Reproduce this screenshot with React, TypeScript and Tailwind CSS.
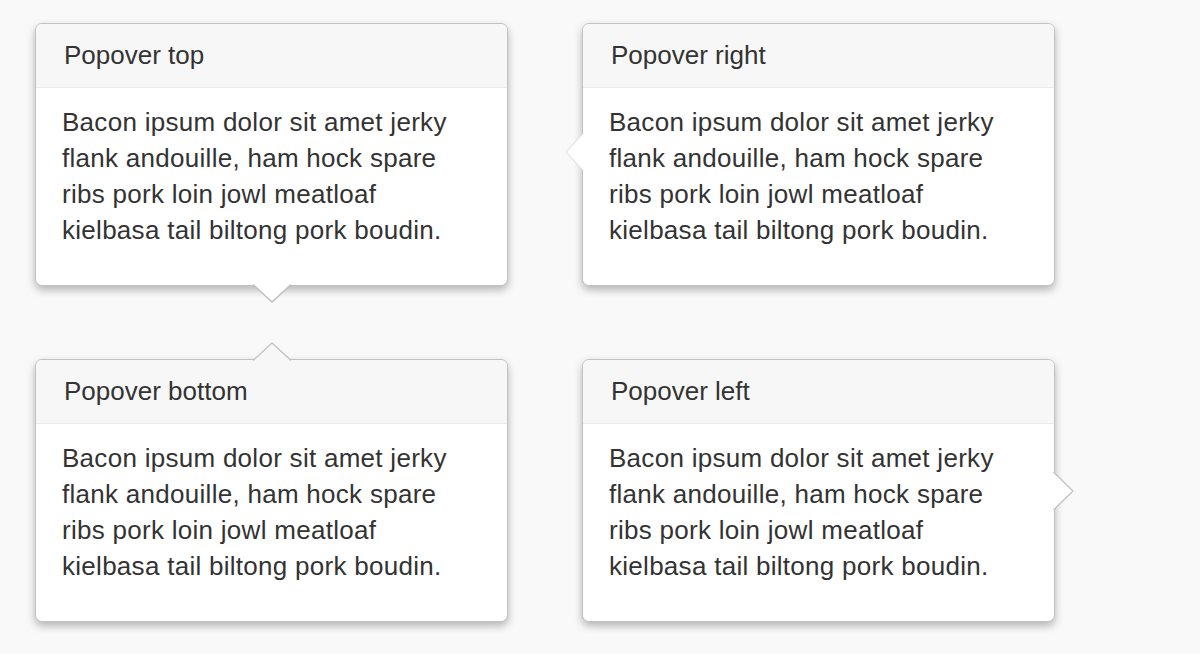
import React from "react";

type Side = "top" | "right" | "bottom" | "left";

const text =
  "Bacon ipsum dolor sit amet jerky flank andouille, ham hock spare ribs pork loin jowl meatloaf kielbasa tail biltong pork boudin.";

const lines = [
  "Bacon ipsum dolor sit amet jerky",
  "flank andouille, ham hock spare",
  "ribs pork loin jowl meatloaf",
  "kielbasa tail biltong pork boudin.",
];

// little triangle hanging off the box, drawn over the border
const Arrow: React.FC<{ side: Side }> = ({ side }) => {
  if (side === "top") {
    // popover sits above its target, arrow points down
    return (
      <svg
        className="absolute left-1/2 -translate-x-1/2 -bottom-[18px]"
        width="38"
        height="19"
        viewBox="0 0 38 19"
      >
        <polygon points="0,0 19,18 38,0" fill="#ffffff" />
        <polyline points="0,0.5 19,18 38,0.5" fill="none" stroke="#bdbdbd" strokeWidth="1.3" />
      </svg>
    );
  }
  if (side === "bottom") {
    return (
      <svg
        className="absolute left-1/2 -translate-x-1/2 -top-[18px]"
        width="38"
        height="19"
        viewBox="0 0 38 19"
      >
        <polygon points="0,19 19,1 38,19" fill="#f7f7f7" />
        <polyline points="0,18.5 19,1 38,18.5" fill="none" stroke="#c4c4c4" strokeWidth="1.3" />
      </svg>
    );
  }
  if (side === "right") {
    return (
      <svg
        className="absolute top-1/2 -translate-y-1/2 -left-[18px] mt-[-3px]"
        width="19"
        height="38"
        viewBox="0 0 19 38"
      >
        <polygon points="19,0 1,19 19,38" fill="#ffffff" />
        <polyline points="18.5,0 1,19 18.5,38" fill="none" stroke="#e6e6e6" strokeWidth="1.2" />
      </svg>
    );
  }
  return (
    <svg
      className="absolute top-1/2 -translate-y-1/2 -right-[20px]"
      width="21"
      height="38"
      viewBox="0 0 21 38"
    >
      <polygon points="0,0 20,19 0,38" fill="#ffffff" />
      <polyline points="0.5,0 20,19 0.5,38" fill="none" stroke="#c2c2c2" strokeWidth="1.3" />
    </svg>
  );
};

const Popover: React.FC<{ title: string; side: Side }> = ({ title, side }) => {
  return (
    <div className="relative w-[473px] h-[263px] bg-white border border-[#c2c2c2] rounded-[7px] shadow-[0_4px_9px_rgba(0,0,0,0.28)]">
      <Arrow side={side} />
      <div className="h-[64px] px-[28px] flex items-center bg-[#f7f7f7] border-b border-[#ebebeb] rounded-t-[7px] text-[26px] text-[#333333]">
        {title}
      </div>
      <div
        className="px-[26px] pt-[16px] text-[26px] leading-[36px] tracking-[0.28px] text-[#333333]"
        title={text}
      >
        {lines.map((l, i) => (
          <div key={i}>{l}</div>
        ))}
      </div>
    </div>
  );
};

export default function App() {
  return (
    <div
      className="w-[1200px] h-[654px] bg-[#f9f9f9] pl-[35px] pt-[23px] overflow-hidden"
      style={{ fontFamily: '"Liberation Sans", Arial, sans-serif' }}
    >
      <div className="grid grid-cols-[473px_474px] gap-x-[74px] gap-y-[73px]">
        <Popover title="Popover top" side="top" />
        <Popover title="Popover right" side="right" />
        <Popover title="Popover bottom" side="bottom" />
        <Popover title="Popover left" side="left" />
      </div>
    </div>
  );
}
